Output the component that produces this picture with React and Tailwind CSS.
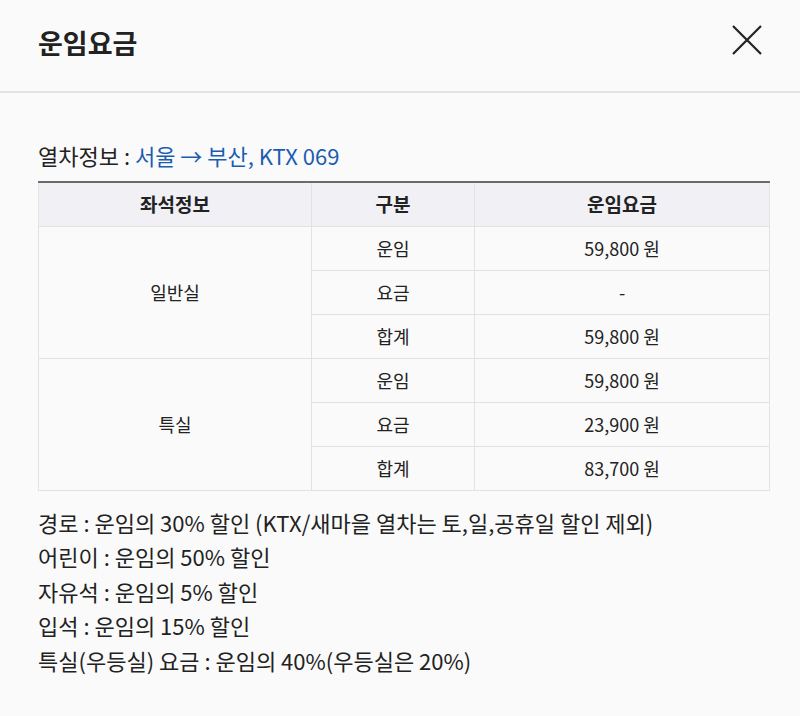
import React from 'react';

const rows = [
  { seat: '일반실', items: [['운임', '59,800 원'], ['요금', '-'], ['합계', '59,800 원']] },
  { seat: '특실', items: [['운임', '59,800 원'], ['요금', '23,900 원'], ['합계', '83,700 원']] },
];

const notes = [
  '경로 : 운임의 30% 할인 (KTX/새마을 열차는 토,일,공휴일 할인 제외)',
  '어린이 : 운임의 50% 할인',
  '자유석 : 운임의 5% 할인',
  '입석 : 운임의 15% 할인',
  '특실(우등실) 요금 : 운임의 40%(우등실은 20%)',
];

export default function App() {
  return (
    <div className="w-[800px] h-[716px] bg-[#fafafa] text-[#222] font-['Noto_Sans_CJK_KR','Noto_Sans',sans-serif] overflow-hidden">
      {/* header */}
      <div className="h-[93px] flex items-center justify-between pl-[38px] pr-[38px] border-b-2 border-[#e4e4e4]">
        <h1 className="text-[27px] font-bold leading-none -mt-[6px]">운임요금</h1>
        <button className="w-[30px] h-[30px] -mt-[12px]">
          <svg width="30" height="30" viewBox="0 0 30 30" fill="none" stroke="#222" strokeWidth="2.2">
            <path d="M1 1 L29 29 M29 1 L1 29" />
          </svg>
        </button>
      </div>

      <div className="pl-[38px] pr-[30px] pt-[45px]">
        <p className="text-[22px] leading-[34px]">
          열차정보 : <span className="text-[#1a5db2]">서울 → 부산, KTX 069</span>
        </p>

        <table className="mt-[9px] w-full border-collapse text-[18px] text-center">
          <colgroup>
            <col className="w-[273px]" />
            <col className="w-[163px]" />
            <col />
          </colgroup>
          <thead>
            <tr className="h-[44px] bg-[#f0f0f5]">
              <th className="font-bold text-[19px] border border-[#e2e2e2] border-t-[#6b6b6b] border-t-2">좌석정보</th>
              <th className="font-bold text-[19px] border border-[#e2e2e2] border-t-[#6b6b6b] border-t-2">구분</th>
              <th className="font-bold text-[19px] border border-[#e2e2e2] border-t-[#6b6b6b] border-t-2">운임요금</th>
            </tr>
          </thead>
          <tbody>
            {rows.map((r) =>
              r.items.map(([k, v], i) => (
                <tr key={r.seat + k} className="h-[44px]">
                  {i === 0 && (
                    <td rowSpan={3} className="border border-[#e2e2e2]">
                      {r.seat}
                    </td>
                  )}
                  <td className="border border-[#e2e2e2]">{k}</td>
                  <td className="border border-[#e2e2e2]">{v}</td>
                </tr>
              ))
            )}
          </tbody>
        </table>

        <div className="mt-[14px] text-[22px] leading-[34.5px]">
          {notes.map((n) => (
            <p key={n}>{n}</p>
          ))}
        </div>
      </div>
    </div>
  );
}
